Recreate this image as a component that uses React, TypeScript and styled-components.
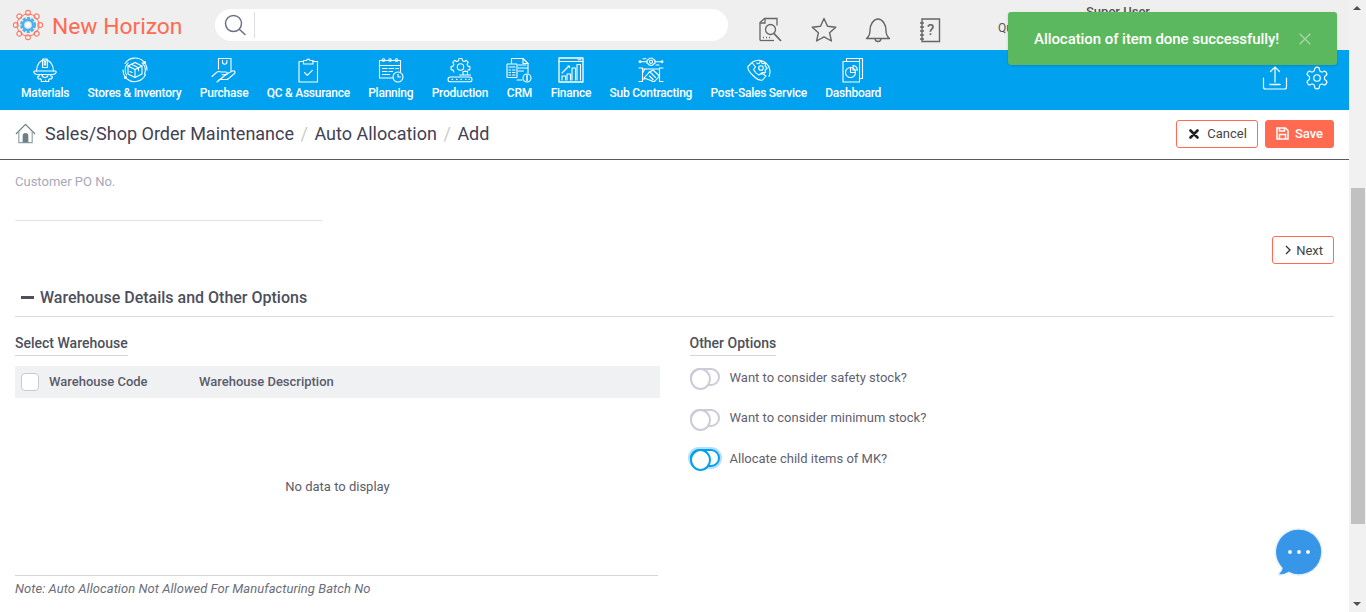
import React from 'react';
import styled, { createGlobalStyle } from 'styled-components';

const GlobalStyle = createGlobalStyle`
  html, body {
    margin: 0;
    height: 100%;
    overflow: hidden;
    background: #fff;
    font-family: Roboto, "Liberation Sans", sans-serif;
  }
  * { box-sizing: border-box; }
`;

const S = { fill: 'none', stroke: 'currentColor', strokeWidth: 1.1, strokeLinecap: 'round', strokeLinejoin: 'round' } as const;

function Svg({ children }: { children: React.ReactNode }) {
  return (
    <svg width="26" height="26" viewBox="0 0 26 26" {...S}>
      {children}
    </svg>
  );
}

const MaterialsIcon = () => (
  <Svg>
    <path d="M4.500 14C4.500 7.500 8 3 13 3s8.500 4.500 8.500 11" />
    <path d="M3 14h20c1 0 1.500 1 1 1.800-.8 1.300-1.800 1.700-3 1.700H5c-1.200 0-2.200-.4-3-1.700-.5-.8 0-1.800 1-1.800z" />
    <rect x="10.500" y="2" width="5" height="8.500" rx=".5" />
    <path d="M12.200 4.500h1.600v3.500h-1.600z" />
    <path d="M7.500 17.500l-.5 1.500-1.500 1 1 2 1.800-.3 1.200 1.300-.3 1.500h4.600l-.3-1.500" />
    <path d="M18.500 17.500l.5 1.500 1.500 1-1 2-1.800-.3-1.200 1.300.3 1.500H12" />
    <path d="M10 17.500a3 3 0 0 0 6 0" />
  </Svg>
);
const StoresIcon = () => (
  <Svg>
    <path d="M21.500 4.500A12 12 0 0 0 3 6.500M1 13a12 12 0 0 0 2.500 7.500M5 22a12 12 0 0 0 18.500-4.500M25 13a12 12 0 0 0-1.500-6" />
    <path d="M4.500 18A10 10 0 0 1 6 6M20 5.800A10 10 0 0 1 22.500 17" />
    <path d="M13 5.500l7 3.500v8l-7 3.500-7-3.500V9z" />
    <path d="M6 9l7 3.500L20 9M13 12.500v8M9.500 7.200l7 3.500v3" />
    <path d="M8 14.500l2 1" />
    <circle cx="22.500" cy="5.500" r="1" fill="currentColor" />
    <circle cx="3.500" cy="20.500" r="1" fill="currentColor" />
  </Svg>
);
const PurchaseIcon = () => (
  <Svg>
    <path d="M7.500 12V1.500h12.500v12" />
    <path d="M11.500 3.500v1.500a2.200 2.200 0 0 0 4.400 0V3.500" />
    <path d="M1 19.500l4.500-4c1.500-1.200 3-1.200 4.500-.5h5c1.700 0 1.700 2.800 0 2.800h-4" />
    <path d="M15.500 17l6-3c2-.8 3.500 1 2 2.500l-6 5.200c-.8.600-1.600.8-2.500.8H8.500L6 25z" />
  </Svg>
);
const QcIcon = () => (
  <Svg>
    <path d="M8.500 4.500H4v20.500h18.500V4.500H18" />
    <path d="M8.500 3.500h3a1.800 1.800 0 0 1 3.500 0h3V7H8.500z" />
    <path d="M9.500 15.500l2.800 2.800 5-5" />
  </Svg>
);
const PlanningIcon = () => (
  <Svg>
    <path d="M14.500 21H1.500V3.500h21V15" />
    <path d="M1.500 8.500h21" />
    <circle cx="5.500" cy="3" r="1.300" />
    <circle cx="12" cy="3" r="1.300" />
    <circle cx="18.500" cy="3" r="1.300" />
    <path d="M4.500 11.500h4.500M11 11.500h4.500M17.500 11.500h3M4.500 14.500h4.500M11 14.500h3.500M4.500 17.500h7" />
    <circle cx="20" cy="20" r="5" />
    <path d="M20 17.300V20h2.400" />
  </Svg>
);
const ProductionIcon = () => (
  <Svg>
    <path d="M12 1.500h3l.5 2.200 1.900.8 1.900-1.200 2 2-1.200 1.900.8 1.900 2 .5v3l-2 .5M12 1.500l-.5 2.200-1.900.8-1.900-1.200-2 2 1.200 1.900-.8 1.900-2 .5v3l2 .5.8 1.900" />
    <circle cx="13.500" cy="10" r="3.200" />
    <path d="M16 14.500h4.500v3.500H16zM12.500 18h11v0M18.200 13.500v1" />
    <rect x="1" y="20" width="24" height="4.800" rx="2.400" />
    <path d="M5 22.400h.5M9.500 22.400h.5M14 22.400h.5M18.500 22.400h.5M22 22.400h.3" />
  </Svg>
);
const CrmIcon = () => (
  <Svg>
    <path d="M5.500 6V1.500h11.500l5 5V16" />
    <path d="M17 1.500v5h5" />
    <rect x="1" y="7" width="10" height="13.500" rx=".5" />
    <path d="M3 10h6M3 13h1.500M6.500 13H9M3 15.500h1.500M6.500 15.500H9M3 18h1.500M6.500 18H9" />
    <path d="M12.500 8h7.500M12.500 11h9M12.500 14h5M11 23h5" />
    <circle cx="21" cy="21" r="4" />
    <path d="M21 18.500v5" strokeWidth="1.500" />
  </Svg>
);
const FinanceIcon = () => (
  <Svg>
    <rect x="1" y="1" width="24" height="24" strokeWidth="1.300" />
    <path d="M1 4.500h24M20 2.800h3" />
    <path d="M4 16l7-7M10 9h1.500v1.500" />
    <path d="M4 23v-4h3.500v4M9 23v-6h3.500v6M14 23V11h3.500v12M19 23V7.500h3.500V23" />
  </Svg>
);
const SubContractIcon = () => (
  <Svg>
    <path d="M10.500 2.500l1-1.200h3l1 1.200 1.500.8v3l-1.500.8-1 1.200h-3l-1-1.200-1.500-.8v-3z" />
    <circle cx="13" cy="4.800" r="1.600" />
    <path d="M3 4.800h6M17 4.800h6M5 1.800h3M18 8h3" />
    <circle cx="2" cy="4.800" r=".9" />
    <circle cx="24" cy="4.800" r=".9" />
    <path d="M1 11h3.500v13.500H1M25 11h-3.500v13.500H25" />
    <path d="M4.500 12h17M4.500 22h2" />
    <path d="M7 12l-2.500 4M6 21l5.500-6 3.500-2 6.500 6-4.500 5c-1.500 1-2.500.5-3.500-.3z" />
    <path d="M11.500 19l3.500 3.500M14 17l3.500 3.500M11 15l3 1.500" />
  </Svg>
);
const PostSalesIcon = () => (
  <Svg>
    <path d="M6.500 5A11.500 11.500 0 0 1 23 19.500" />
    <path d="M2 9.500L6 5.500l3.500 4.500-2 2.500c1 2 3 4.500 5.500 5.500l2.500-2L20 19l-3.500 4c-3 1-6.500-1.500-9.500-4.500S1 12.500 2 9.500z" />
    <path d="M15.500 4.800l.4 1.400 1.300.5 1.300-.7 1.200 1.200-.7 1.300.5 1.300 1.400.4v1.700l-1.400.4-.5 1.300.7 1.300-1.200 1.200-1.300-.7-1.300.5-.4 1.400" />
    <path d="M15.500 4.800h-1.700l-.4 1.400-1.300.5-1.300-.7" />
    <circle cx="15" cy="11" r="2.300" />
  </Svg>
);
const DashboardIcon = () => (
  <Svg>
    <path d="M6.500 4.500V1.500h16v20h-3" />
    <path d="M3 4.500h16.500V25H3z" />
    <path d="M19.500 4.500v-3" />
    <circle cx="10.500" cy="15.500" r="5" />
    <path d="M10.500 10.500v5h5" />
    <path d="M13 8.500a5 5 0 0 1 4.500 4.500H13z" />
  </Svg>
);

const SearchDocIcon = () => (
  <svg width="26" height="26" viewBox="0 0 26 26" fill="none" stroke="#666" strokeWidth="1.300">
    <path d="M3 23.500V5.500L7.500 1.500h12.500v7" />
    <path d="M3 23.500h14" />
    <path d="M3 6h5V1.500" />
    <circle cx="13.500" cy="12.500" r="5" />
    <path d="M17 16.500l7 7.500" strokeWidth="1.800" />
    <path d="M6 20.500h1M9 20.500h1M12 20.500h1" />
  </svg>
);
const StarIcon = () => (
  <svg width="26" height="25" viewBox="0 0 26 25" fill="none" stroke="#666" strokeWidth="1.400" strokeLinejoin="round">
    <path d="M13 1.500l3.500 7.800 8.300.9-6.200 5.600 1.800 8.200L13 19.800 5.600 24l1.800-8.200L1.200 10.200l8.300-.9z" />
  </svg>
);
const BellIcon = () => (
  <svg width="26" height="26" viewBox="0 0 26 26" fill="none" stroke="#666" strokeWidth="1.400" strokeLinejoin="round">
    <path d="M1.500 21.500c2.500-2 3.500-4 3.500-8 0-6 3.500-11.500 8-11.500s8 5.500 8 11.500c0 4 1 6 3.500 8z" />
    <path d="M10 21.500a3 3 0 0 0 6 0" />
  </svg>
);
const NotebookIcon = () => (
  <svg width="22" height="26" viewBox="0 0 22 26" fill="none" stroke="#666" strokeWidth="1.400">
    <path d="M3 2h17.500v22.500H3z" />
    <path d="M1 6h4M1 10h4M1 14h4M1 18h4M1 22h4" />
    <text x="8" y="18" fill="#666" stroke="none" fontSize="15" fontFamily="Roboto, sans-serif" fontWeight="500">?</text>
  </svg>
);

const LogoIcon = () => (
  <svg width="32" height="32" viewBox="0 0 32 32" fill="none">
    {[0, 45, 90, 135, 180, 225, 270, 315].map(a => (
      <circle key={a} cx="16" cy="3.800" r="2.400" stroke="#ff7660" strokeWidth="1.100" fill="#fff" transform={`rotate(${a} 16 16)`} />
    ))}
    <circle cx="16" cy="16" r="11" stroke="#ff7660" strokeWidth="1" />
    <circle cx="16" cy="16" r="6.300" stroke="#4db2ec" strokeWidth="3.400" strokeDasharray="2.800 1.200" />
    <circle cx="16" cy="16" r="5" stroke="#4db2ec" strokeWidth="2.400" />
    <circle cx="16" cy="16" r="2.200" fill="#fff" />
  </svg>
);

const HomeIcon = () => (
  <svg width="21" height="21" viewBox="0 0 22 22" fill="none">
    <path d="M1 11.500L11 1.500l10 10" stroke="#6e8086" strokeWidth="1.200" />
    <path d="M4 9v11.500h14V9" stroke="#8fa0a5" strokeWidth="1.200" />
    <path d="M8 20.500v-7a3 3 0 0 1 6 0v7z" fill="#6e8086" />
  </svg>
);

const navItems = [
  { label: 'Materials', icon: <MaterialsIcon /> },
  { label: 'Stores & Inventory', icon: <StoresIcon /> },
  { label: 'Purchase', icon: <PurchaseIcon /> },
  { label: 'QC & Assurance', icon: <QcIcon /> },
  { label: 'Planning', icon: <PlanningIcon /> },
  { label: 'Production', icon: <ProductionIcon /> },
  { label: 'CRM', icon: <CrmIcon /> },
  { label: 'Finance', icon: <FinanceIcon /> },
  { label: 'Sub Contracting', icon: <SubContractIcon /> },
  { label: 'Post-Sales Service', icon: <PostSalesIcon /> },
  { label: 'Dashboard', icon: <DashboardIcon /> },
];

export default function App() {
  return (
    <Shell>
      <GlobalStyle />
      <Page>
        <TopBar>
          <Logo>
            <LogoIcon />
            <LogoText>New Horizon</LogoText>
          </Logo>
          <SearchBox>
            <svg width="24" height="24" viewBox="0 0 24 24" fill="none" stroke="#6b7086" strokeWidth="1.500">
              <circle cx="10.500" cy="10.500" r="8" />
              <path d="M16.500 16.500l5.500 5" strokeLinecap="round" />
            </svg>
            <SearchDivider />
          </SearchBox>
          <TopIcons>
            <SearchDocIcon />
            <StarIcon />
            <BellIcon />
            <NotebookIcon />
          </TopIcons>
          <UserBlock>
            <UserName>Super User</UserName>
            <UserRole>Quality</UserRole>
          </UserBlock>
        </TopBar>

        <NavBar>
          <NavList>
            {navItems.map(item => (
              <NavItem key={item.label}>
                {item.icon}
                <NavLabel>{item.label}</NavLabel>
              </NavItem>
            ))}
          </NavList>
          <NavTools>
            <svg width="26" height="26" viewBox="0 0 26 26" fill="none" stroke="#fff" strokeWidth="1.200" strokeLinecap="round">
              <path d="M13 2v15M8.500 6.500L13 2l4.500 4.500" />
              <path d="M8 19.500h10" strokeWidth="1.600" />
              <path d="M1.500 13v9a2 2 0 0 0 2 2h19a2 2 0 0 0 2-2v-9" />
            </svg>
            <svg width="26" height="26" viewBox="0 0 24 24" fill="none" stroke="#fff" strokeWidth="1.100" strokeLinecap="round" strokeLinejoin="round">
              <path d="M12.220 2h-.44a2 2 0 0 0-2 2v.18a2 2 0 0 1-1 1.730l-.43.250a2 2 0 0 1-2 0l-.15-.080a2 2 0 0 0-2.730.730l-.22.380a2 2 0 0 0 .730 2.730l.15.100a2 2 0 0 1 1 1.720v.510a2 2 0 0 1-1 1.740l-.15.090a2 2 0 0 0-.730 2.730l.22.380a2 2 0 0 0 2.730.730l.15-.080a2 2 0 0 1 2 0l.43.250a2 2 0 0 1 1 1.730V20a2 2 0 0 0 2 2h.44a2 2 0 0 0 2-2v-.18a2 2 0 0 1 1-1.730l.43-.250a2 2 0 0 1 2 0l.15.080a2 2 0 0 0 2.730-.730l.22-.390a2 2 0 0 0-.730-2.730l-.15-.080a2 2 0 0 1-1-1.740v-.5a2 2 0 0 1 1-1.740l.15-.090a2 2 0 0 0 .730-2.730l-.22-.380a2 2 0 0 0-2.730-.730l-.15.080a2 2 0 0 1-2 0l-.43-.250a2 2 0 0 1-1-1.730V4a2 2 0 0 0-2-2z" />
              <circle cx="12" cy="12" r="3" />
            </svg>
          </NavTools>
        </NavBar>

        <CrumbBar>
          <HomeIcon />
          <Crumbs>
            <span>Sales/Shop Order Maintenance</span>
            <CrumbSep>/</CrumbSep>
            <span>Auto Allocation</span>
            <CrumbSep>/</CrumbSep>
            <span>Add</span>
          </Crumbs>
          <CrumbActions>
            <OutlineButton>
              <svg width="10" height="10" viewBox="0 0 10 10" stroke="#222" strokeWidth="2.600" strokeLinecap="round">
                <path d="M1.500 1.500l7 7M8.500 1.500l-7 7" />
              </svg>
              Cancel
            </OutlineButton>
            <SaveButton>
              <svg width="13" height="13" viewBox="0 0 13 13" fill="none" stroke="#fff" strokeWidth="1.500">
                <path d="M1 1h8.500L12 3.500V12H1z" />
                <path d="M3.500 1v3h5V1M3.500 12V7.500h6V12" />
              </svg>
              Save
            </SaveButton>
          </CrumbActions>
        </CrumbBar>

        <Content>
          <PoField>
            <PoLabel>Customer PO No.</PoLabel>
          </PoField>
          <NextRow>
            <NextButton>
              <svg width="8" height="10" viewBox="0 0 8 10" fill="none" stroke="#333" strokeWidth="1.300">
                <path d="M2 1l4 4-4 4" />
              </svg>
              Next
            </NextButton>
          </NextRow>
          <SectionHeader>
            <Dash />
            Warehouse Details and Other Options
          </SectionHeader>
          <Columns>
            <LeftColumn>
              <SubTitle>Select Warehouse</SubTitle>
              <TableHead>
                <CheckBox />
                <CodeColumn>Warehouse Code</CodeColumn>
                <DescColumn>Warehouse Description</DescColumn>
              </TableHead>
              <EmptyState>No data to display</EmptyState>
              <Note>Note: Auto Allocation Not Allowed For Manufacturing Batch No</Note>
            </LeftColumn>
            <RightColumn>
              <SubTitle>Other Options</SubTitle>
              <OptionList>
                <Option>
                  <Toggle />
                  Want to consider safety stock?
                </Option>
                <Option>
                  <Toggle />
                  Want to consider minimum stock?
                </Option>
                <Option>
                  <Toggle $focused />
                  Allocate child items of MK?
                </Option>
              </OptionList>
            </RightColumn>
          </Columns>
        </Content>
      </Page>

      <ScrollTrack>
        <ScrollArrow $up />
        <ScrollThumb />
        <ScrollArrow />
      </ScrollTrack>

      <Toast>
        <span>Allocation of item done successfully!</span>
        <svg width="12" height="12" viewBox="0 0 12 12" stroke="#a5d6a7" strokeWidth="1.400">
          <path d="M.7.700l10.600 10.600M11.300.700L.7 11.300" />
        </svg>
      </Toast>

      <ChatBubble>
        <svg width="56" height="56" viewBox="0 0 56 56">
          <path d="M28 5a23 23 0 1 1-10.500 43.500c-2.500 1.800-6 2.800-9 2.500-1-.1-1.200-1.200-.5-1.800 1.500-1.300 2.600-3 3-5A23 23 0 0 1 28 5z" fill="#3796e8" stroke="#e4f0fb" strokeWidth="1.500" />
          <circle cx="19" cy="28" r="1.900" fill="#fff" />
          <circle cx="28" cy="28" r="1.900" fill="#fff" />
          <circle cx="37" cy="28" r="1.900" fill="#fff" />
        </svg>
      </ChatBubble>
    </Shell>
  );
}

const Shell = styled.div`
  position: relative;
  display: flex;
  width: 1366px;
  height: 612px;
  overflow: hidden;
`;

const Page = styled.div`
  flex: 1;
  min-width: 0;
  display: flex;
  flex-direction: column;
`;

const TopBar = styled.header`
  position: relative;
  display: flex;
  align-items: center;
  height: 50px;
  padding-left: 12px;
  background: #efefef;
`;

const Logo = styled.div`
  display: flex;
  align-items: center;
  gap: 8px;
  width: 203px;
`;

const LogoText = styled.span`
  padding-top: 2px;
  font-size: 22.8px;
  font-weight: 400;
  color: #ff6a50;
  white-space: nowrap;
`;

const SearchBox = styled.div`
  display: flex;
  align-items: center;
  gap: 7px;
  width: 513px;
  height: 32px;
  padding-left: 8px;
  border-radius: 16px;
  background: #fff;
`;

const SearchDivider = styled.div`
  width: 1px;
  height: 26px;
  background: #dcdde6;
`;

const TopIcons = styled.div`
  display: flex;
  align-items: center;
  gap: 28px;
  margin: 9px 0 0 28.500px;
`;

const UserBlock = styled.div`
  position: absolute;
  top: 4px;
  left: 998px;
  width: 240px;
  color: #555;
`;

const UserName = styled.div`
  padding-left: 88px;
  font-size: 13px;
  line-height: 16px;
  font-weight: 500;
`;

const UserRole = styled.div`
  margin-top: 0;
  font-size: 12px;
  line-height: 16px;
`;

const NavBar = styled.nav`
  display: flex;
  align-items: flex-start;
  justify-content: space-between;
  height: 60px;
  padding: 7px 19px 0 21px;
  background: #00a2f0;
  color: #fff;
`;

const NavList = styled.div`
  display: flex;
  gap: 18.300px;
`;

const NavItem = styled.div`
  display: flex;
  flex-direction: column;
  align-items: center;
`;

const NavLabel = styled.span`
  margin-top: 2px;
  font-size: 12px;
  line-height: 16px;
  font-weight: 500;
  white-space: nowrap;
  letter-spacing: -0.24px;
`;

const NavTools = styled.div`
  display: flex;
  gap: 16px;
  margin-top: 8px;
`;

const CrumbBar = styled.div`
  display: flex;
  align-items: center;
  gap: 9px;
  height: 50px;
  padding: 0 15px 2px;
  border-bottom: 1px solid #5a5a5a;
`;

const Crumbs = styled.div`
  flex: 1;
  display: flex;
  gap: 6.500px;
  font-size: 18px;
  color: #3f4254;
`;

const CrumbSep = styled.span`
  color: #ccc;
`;

const CrumbActions = styled.div`
  display: flex;
  gap: 7px;
`;

const OutlineButton = styled.button`
  display: flex;
  align-items: center;
  gap: 8px;
  height: 28px;
  padding: 0 10px 0 12px;
  border: 1px solid #ff6a50;
  border-radius: 3px;
  background: #fff;
  color: #444;
  font: 400 13px Roboto, sans-serif;
`;

const SaveButton = styled(OutlineButton)`
  gap: 6px;
  padding: 0 10px;
  background: #ff6a50;
  color: #fff;
  font-weight: 500;
`;

const Content = styled.main`
  flex: 1;
  padding: 0 15px;
`;

const PoField = styled.div`
  width: 307px;
  height: 61px;
  padding-top: 11px;
  border-bottom: 1px solid #e2e2ea;
`;

const PoLabel = styled.label`
  font-size: 13px;
  line-height: 15px;
  color: #a8a8bb;
`;

const NextRow = styled.div`
  display: flex;
  justify-content: flex-end;
  margin-top: 15px;
`;

const NextButton = styled(OutlineButton)`
  gap: 4px;
  padding: 0 10px 0 11px;
  color: #444;
`;

const SectionHeader = styled.div`
  display: flex;
  align-items: center;
  gap: 6px;
  height: 53px;
  padding: 15px 0 0 6px;
  border-bottom: 1px solid #dcdce0;
  font-size: 16px;
  font-weight: 500;
  color: #4d4f5c;
`;

const Dash = styled.i`
  width: 13px;
  height: 3px;
  background: #4d4f5c;
`;

const Columns = styled.div`
  display: grid;
  grid-template-columns: 645px 1fr;
  gap: 29.500px;
  padding-top: 18px;
`;

const LeftColumn = styled.section`
  display: flex;
  flex-direction: column;
  align-items: flex-start;
`;

const RightColumn = styled.section`
  display: flex;
  flex-direction: column;
  align-items: flex-start;
`;

const SubTitle = styled.h4`
  margin: 0;
  height: 21px;
  font-size: 14px;
  line-height: 17px;
  font-weight: 500;
  color: #4d4f5c;
  border-bottom: 1px solid #d4d4dc;
`;

const TableHead = styled.div`
  display: flex;
  align-items: center;
  width: 100%;
  height: 32px;
  margin-top: 10px;
  padding-left: 6px;
  background: #f0f1f3;
  font-size: 13px;
  font-weight: 500;
  color: #5a5c6b;
`;

const CheckBox = styled.span`
  width: 18px;
  height: 18px;
  margin-right: 10px;
  border: 1px solid #c9c9d2;
  border-radius: 4px;
  background: #fff;
`;

const CodeColumn = styled.span`
  width: 150px;
  margin-top: -2px;
`;

const DescColumn = styled.span`
  margin-top: -2px;
`;

const EmptyState = styled.div`
  display: flex;
  align-items: center;
  justify-content: center;
  width: 100%;
  height: 177px;
  font-size: 13px;
  color: #5a5c6b;
`;

const Note = styled.div`
  width: 643px;
  padding-top: 5px;
  border-top: 1px solid #d4d4dc;
  font-size: 13px;
  line-height: 15px;
  font-style: italic;
  color: #6b6d78;
  letter-spacing: 0.05px;
`;

const OptionList = styled.div`
  display: flex;
  flex-direction: column;
  gap: 22.500px;
  margin-top: 12.400px;
`;

const Option = styled.div`
  display: flex;
  align-items: center;
  gap: 10px;
  font-size: 13px;
  color: #5f6170;
`;

const Toggle = styled.span<{ $focused?: boolean }>`
  position: relative;
  width: 30px;
  height: 18px;
  border: 2px solid ${p => (p.$focused ? '#00a2f0' : '#cbccd8')};
  border-radius: 9px;
  background: #fff;
  box-shadow: ${p => (p.$focused ? '0 0 0 2px #b5dffa' : 'none')};

  &::after {
    content: '';
    position: absolute;
    top: -2px;
    left: -2px;
    width: 17px;
    height: 18px;
    border: 2px solid ${p => (p.$focused ? '#00a2f0' : '#cbccd8')};
    border-radius: 50%;
    background: #fff;
  }
`;

const ScrollTrack = styled.aside`
  display: flex;
  flex-direction: column;
  width: 17px;
  background: #f1f1f1;
`;

const ScrollArrow = styled.div<{ $up?: boolean }>`
  position: relative;
  height: 17px;
  flex: none;

  &::after {
    content: '';
    position: absolute;
    left: 4px;
    top: ${p => (p.$up ? '6px' : '7px')};
    border-left: 4px solid transparent;
    border-right: 4px solid transparent;
    ${p => (p.$up ? 'border-bottom: 4px solid #505050;' : 'border-top: 4px solid #505050;')}
  }
`;

const ScrollThumb = styled.div`
  width: 14px;
  height: 336px;
  margin: 171px 0 71px 2px;
  flex: none;
  background: #c1c1c1;
`;

const Toast = styled.div`
  position: absolute;
  top: 12px;
  left: 1008px;
  display: flex;
  align-items: center;
  justify-content: space-between;
  width: 329px;
  height: 53px;
  padding: 0 26px;
  border-radius: 3px;
  background: #5cb85f;
  color: #fff;
  font-size: 15px;
  font-weight: 500;
  letter-spacing: -0.06px;
  box-shadow: 0 1px 3px rgba(0, 0, 0, 0.15);
`;

const ChatBubble = styled.div`
  position: absolute;
  left: 1271px;
  top: 524px;
  width: 56px;
  height: 56px;
`;
